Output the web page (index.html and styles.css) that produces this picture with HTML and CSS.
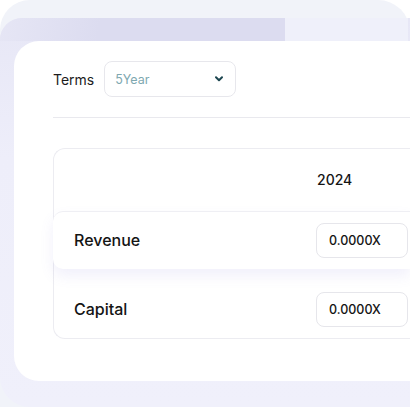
FILE: index.html
```html
<!DOCTYPE html>
<html>
<head>
<meta charset="utf-8">
<link rel="stylesheet" href="styles.css">
</head>
<body>
<div class="frame">
  <div class="stage">
    <div class="card">
      <div class="filters">
        <span class="filter-label">Terms</span>
        <div class="select">
          <span class="select-value">5Year</span>
          <svg class="chevron" width="8" height="6" viewBox="0 0 8 6"><path d="M1 1.2 L4 4.2 L7 1.2" fill="none" stroke="#1d4650" stroke-width="2" stroke-linecap="round" stroke-linejoin="round"/></svg>
        </div>
      </div>
      <div class="divider"></div>
      <div class="table">
        <div class="row head">
          <span class="label"></span>
          <span class="year">2024</span>
        </div>
        <div class="row raised">
          <span class="label">Revenue</span>
          <div class="input">0.0000X</div>
        </div>
        <div class="row">
          <span class="label">Capital</span>
          <div class="input">0.0000X</div>
        </div>
      </div>
    </div>
  </div>
</div>
</body>
</html>
```
FILE: styles.css
```css
html, body {
  margin: 0;
  padding: 0;
}
body {
  width: 410px;
  height: 410px;
  overflow: hidden;
  background: #ffffff;
  font-family: Inter, "Liberation Sans", sans-serif;
  color: #151515;
}
.frame {
  width: 410px;
  background: #f1f3f9;
  border-radius: 30px 32px 0 0;
  padding-top: 18px;
}
.stage {
  position: relative;
  width: 410px;
  height: 389px;
  box-sizing: border-box;
  background: linear-gradient(180deg, #e7e7f6 0px, #eeeefa 140px, #f0f0fb 389px);
  border-radius: 22px 0 0 30px;
  padding: 23px 0 0 14px;
}
.stage::before {
  content: "";
  position: absolute;
  left: 0;
  top: 0;
  width: 285px;
  height: 23px;
  border-top-left-radius: 22px;
  background: linear-gradient(100deg, #e6e6f5 0%, #dcdcf0 35%, #dcdcf0 100%);
}
.stage::after {
  content: "";
  position: absolute;
  left: 285px;
  top: 0;
  width: 123px;
  height: 23px;
  background: #eff0fa;
}
.card {
  position: relative;
  z-index: 1;
  width: 396px;
  height: 340px;
  box-sizing: border-box;
  overflow: hidden;
  background: #ffffff;
  border-radius: 25px 0 0 25px;
  padding: 20px 0 0 39px;
}
.filters {
  display: flex;
  align-items: center;
  gap: 10px;
}
.filter-label {
  font-size: 14px;
  color: #1c1c1c;
}
.select {
  width: 132px;
  height: 36px;
  box-sizing: border-box;
  border: 1px solid #e7e7ec;
  border-radius: 8px;
  display: flex;
  align-items: center;
  justify-content: space-between;
  padding: 0 12px 0 10px;
}
.select-value {
  font-size: 12.5px;
  color: #7ea8b0;
}
.chevron {
  display: block;
}
.divider {
  margin-top: 20px;
  height: 1px;
  background: #e9e9ee;
}
.table {
  margin-top: 30px;
  border: 1px solid #ececf1;
  border-right: 0;
  border-radius: 12px 0 0 12px;
  display: flex;
  flex-direction: column;
  gap: 11px;
  height: 191px;
  box-sizing: border-box;
}
.row {
  display: grid;
  grid-template-columns: 242px 92px;
  align-items: center;
  height: 58px;
  padding-left: 20px;
  border-radius: 10px 0 0 10px;
}
.row.head {
  height: 62px;
}
.row.raised {
  margin-top: -11px;
  margin-left: -1px;
  padding-left: 21px;
  border-top: 1px solid #efeff4;
  background: #ffffff;
  box-shadow: 0 7px 14px rgba(120, 110, 220, 0.10);
}
.label {
  font-size: 16px;
  font-weight: 500;
  color: #141414;
}
.year {
  font-size: 14px;
  font-weight: 500;
  padding-left: 1px;
  color: #141414;
}
.input {
  height: 35px;
  box-sizing: border-box;
  border: 1px solid #e6e6eb;
  border-radius: 8px;
  display: flex;
  align-items: center;
  padding-left: 12px;
  font-size: 12.5px;
  font-weight: 500;
  color: #141414;
}
```
